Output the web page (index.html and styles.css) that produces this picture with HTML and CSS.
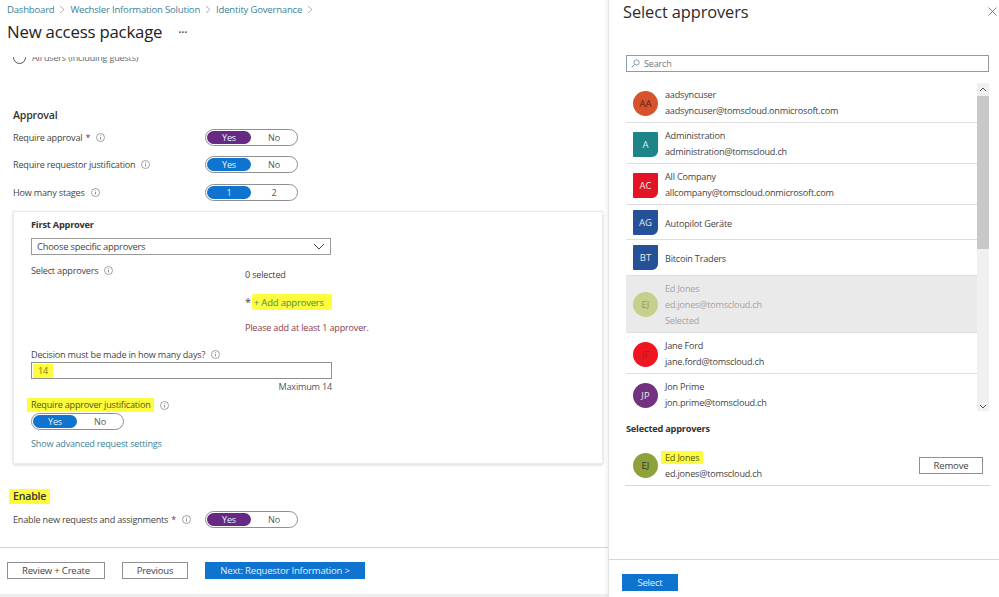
FILE: index.html
```html
<!DOCTYPE html>
<html lang="en">
<head>
<meta charset="utf-8">
<title>New access package</title>
<link rel="stylesheet" href="styles.css">
</head>
<body>
<svg class="defs" aria-hidden="true">
  <symbol id="info" viewBox="0 0 9 9"><circle cx="4.5" cy="4.5" r="4" fill="none" stroke="#8a8a8a" stroke-width=".8"/><path d="M4.5 3.9v2.6M4.5 2.3v.8" stroke="#777" stroke-width=".8" fill="none"/></symbol>
  <symbol id="crumb" viewBox="0 0 6 9"><path d="M1 1l4 3.5L1 8" fill="none" stroke="#a6a6a6" stroke-width=".9"/></symbol>
</svg>
<div class="app">
  <main class="main">
    <nav class="crumbs">
      <a>Dashboard</a><svg class="sep"><use href="#crumb"/></svg>
      <a>Wechsler Information Solution</a><svg class="sep"><use href="#crumb"/></svg>
      <a>Identity Governance</a><svg class="sep"><use href="#crumb"/></svg>
    </nav>
    <header class="title-row">
      <h1>New access package</h1>
      <span class="dots">···</span>
    </header>
    <div class="scroll">
      <div class="radio-row"><span class="radio"></span><span class="radio-text">All users (including guests)</span></div>
      <h2 class="approval-h">Approval</h2>
      <div class="row r1"><div class="label">Require approval <b class="star">*</b><svg class="info"><use href="#info"/></svg></div>
        <div class="toggle"><span class="on purple">Yes</span><span class="off">No</span></div></div>
      <div class="row r2"><div class="label">Require requestor justification<svg class="info"><use href="#info"/></svg></div>
        <div class="toggle"><span class="on">Yes</span><span class="off">No</span></div></div>
      <div class="row r3"><div class="label">How many stages<svg class="info"><use href="#info"/></svg></div>
        <div class="toggle"><span class="on">1</span><span class="off">2</span></div></div>
      <section class="card">
        <h3>First Approver</h3>
        <div class="select"><span>Choose specific approvers</span>
          <svg class="chev" viewBox="0 0 12 7"><path d="M1 1l5 5 5-5" fill="none" stroke="#444" stroke-width="1"/></svg></div>
        <div class="pick">
          <div class="pick-label">Select approvers<svg class="info"><use href="#info"/></svg></div>
          <div class="pick-value">
            <div class="zero">0 selected</div>
            <div class="add"><span class="star-dark">*</span><span class="hl add-link">+ Add approvers</span></div>
            <div class="error">Please add at least 1 approver.</div>
          </div>
        </div>
        <div class="days-label">Decision must be made in how many days?<svg class="info"><use href="#info"/></svg></div>
        <div class="input"><span class="hl days">14</span></div>
        <div class="max">Maximum 14</div>
        <div class="just-label"><span class="hl just">Require approver justification</span><svg class="info"><use href="#info"/></svg></div>
        <div class="toggle narrow"><span class="on">Yes</span><span class="off">No</span></div>
        <a class="advanced">Show advanced request settings</a>
      </section>
      <h2 class="enable-h"><span class="hl enable">Enable</span></h2>
      <div class="row r4"><div class="label">Enable new requests and assignments <b class="star">*</b><svg class="info"><use href="#info"/></svg></div>
        <div class="toggle"><span class="on purple">Yes</span><span class="off">No</span></div></div>
    </div>
    <footer class="foot">
      <button class="btn review">Review + Create</button>
      <button class="btn prev">Previous</button>
      <button class="btn primary next">Next: Requestor Information &gt;</button>
    </footer>
    <div class="strip"></div>
  </main>
  <aside class="panel">
    <header class="panel-head">
      <h2>Select approvers</h2>
      <svg class="close" viewBox="0 0 10 10"><path d="M.5.5l9 9M9.5.5l-9 9" stroke="#555" stroke-width=".8" fill="none"/></svg>
    </header>
    <div class="search">
      <svg class="mag" viewBox="0 0 10 10"><circle cx="6.2" cy="3.8" r="2.9" fill="none" stroke="#5b8a9c" stroke-width=".9"/><path d="M4 6L.8 9.2" stroke="#5b8a9c" stroke-width="1" fill="none"/></svg>
      <span>Search</span>
    </div>
    <div class="list-wrap">
      <ul class="list">
        <li class="item h40"><span class="av round orange">AA</span><div class="who"><div>aadsyncuser</div><div>aadsyncuser@tomscloud.onmicrosoft.com</div></div></li>
        <li class="item h41"><span class="av group teal">A</span><div class="who"><div>Administration</div><div>administration@tomscloud.ch</div></div></li>
        <li class="item h41"><span class="av group red">AC</span><div class="who"><div>All Company</div><div>allcompany@tomscloud.onmicrosoft.com</div></div></li>
        <li class="item h35"><span class="av group navy">AG</span><div class="who"><div>Autopilot Geräte</div></div></li>
        <li class="item h36"><span class="av group navy">BT</span><div class="who"><div>Bitcoin Traders</div></div></li>
        <li class="item h57 chosen"><span class="av round pale">EJ</span><div class="who"><div>Ed Jones</div><div>ed.jones@tomscloud.ch</div><div>Selected</div></div></li>
        <li class="item h41"><span class="av round scarlet">JF</span><div class="who"><div>Jane Ford</div><div>jane.ford@tomscloud.ch</div></div></li>
        <li class="item h40 last"><span class="av round plum">JP</span><div class="who"><div>Jon Prime</div><div>jon.prime@tomscloud.ch</div></div></li>
      </ul>
      <div class="bar">
        <svg class="arrow" viewBox="0 0 8 5"><path d="M1 4l3-3 3 3" fill="none" stroke="#555" stroke-width="1"/></svg>
        <div class="thumb"></div>
        <svg class="arrow down" viewBox="0 0 8 5"><path d="M1 1l3 3 3-3" fill="none" stroke="#555" stroke-width="1"/></svg>
      </div>
    </div>
    <h3 class="sel-h">Selected approvers</h3>
    <div class="sel-row">
      <span class="av round olive">EJ</span>
      <div class="who"><div><span class="hl ed">Ed Jones</span></div><div>ed.jones@tomscloud.ch</div></div>
      <button class="btn remove">Remove</button>
    </div>
    <div class="panel-space"></div>
    <footer class="panel-foot"><button class="btn primary select-btn">Select</button></footer>
  </aside>
</div>
</body>
</html>
```
FILE: styles.css
```css
* { box-sizing: border-box; }
html, body { margin: 0; padding: 0; height: 100%; }
body { font-family: "Open Sans", "Noto Sans", sans-serif; font-size: 9.1px; letter-spacing: -.2px; color: #444; background: #fff; overflow: hidden; }
.defs { position: absolute; width: 0; height: 0; }
h1, h2, h3, ul { margin: 0; padding: 0; }
ul { list-style: none; }
.app { display: flex; width: 999px; height: 597px; }

/* main */
.main { width: 608px; flex: none; display: flex; flex-direction: column; height: 597px; }
.crumbs { height: 18px; padding-left: 7px; display: flex; align-items: center; gap: 5px; color: #3d8296; font-size: 9.55px; white-space: nowrap; }
.sep { width: 6px; height: 9px; }
.title-row { height: 39px; padding: 0 0 13px 7px; display: flex; align-items: center; }
h1 { font-size: 16.8px; letter-spacing: -.2px; font-weight: 500; color: #222; white-space: nowrap; }
.dots { margin-left: 16px; font-size: 11px; color: #555; font-weight: 700; }
.scroll { height: 490px; overflow: hidden; padding-left: 13px; flex: none; }
.radio-row { margin-top: -6px; height: 13px; margin-bottom: 43px; display: flex; align-items: center; gap: 6px; color: #666; }
.radio-text { line-height: 13px; height: 13px; flex: none; }
.radio { width: 13px; height: 13px; border: 1px solid #555; border-radius: 50%; flex: none; }
h2 { font-weight: 600; color: #333; }
.approval-h { font-size: 10.6px; height: 16px; line-height: 16px; margin: 0 0 6px; }
.row { display: flex; align-items: center; height: 17px; }
.label { width: 192px; display: flex; align-items: center; white-space: nowrap; flex: none; }
.star { color: #a4262c; font-weight: 400; margin-left: 3px; }
.info { width: 9px; height: 9px; margin-left: 6px; flex: none; }
.r1 { margin-bottom: 10px; }
.r2 { margin-bottom: 11px; }
.r3 { margin-bottom: 10px; }
.toggle { width: 93px; height: 17px; border: 1px solid #8f8f8f; border-radius: 9px; display: flex; align-items: center; padding: 0 1px; flex: none; }
.toggle span { display: flex; align-items: center; justify-content: center; height: 13px; }
.on { width: 44px; border-radius: 7px; background: #0e74cf; color: #e6f0f8; }
.on.purple { background: #672a84; }
.off { flex: 1; color: #555; padding-left: 1px; }
.card { width: 590px; height: 253px; border: 1px solid #eaeaea; box-shadow: 0 1px 3px rgba(0,0,0,.16); padding: 0 0 0 17px; }
.card h3 { font-size: 9.2px; font-weight: 700; color: #333; height: 13px; line-height: 13px; margin: 6px 0 7px; }
.select { width: 300px; height: 17px; border: 1px solid #9a9a9a; display: flex; align-items: center; justify-content: space-between; padding: 0 5px; font-size: 9.3px; }
.chev { width: 12px; height: 7px; }
.pick { display: flex; margin-top: 9px; }
.pick-label { width: 214px; height: 13px; display: flex; align-items: center; flex: none; }
.zero { height: 13px; line-height: 13px; margin-top: 4px; }
.add { height: 16px; line-height: 16px; margin-top: 13px; display: flex; }
.star-dark { color: #444; margin-right: 1px; font-size: 11px; }
.hl { background: #fdfd3d; }
.add-link { color: #4d8a4a; font-size: 9.5px; padding: 1px 8px 0 2px; border-radius: 2px; }
.error { color: #8c3b4b; height: 13px; line-height: 13px; margin-top: 11px; }
.days-label { margin-top: 14px; height: 13px; display: flex; align-items: center; }
.input { width: 301px; height: 17px; border: 1px solid #909090; margin-top: 1px; display: flex; align-items: center; padding-left: 1px; }
.days { padding: 0 5px; height: 14px; line-height: 14px; color: #7a7a10; }
.max { width: 301px; text-align: right; height: 13px; line-height: 13px; margin-top: 1px; color: #555; }
.just-label { display: flex; align-items: center; margin: 5px 0 1px -4px; height: 14px; }
.just { padding: 0 3px 0 4px; height: 14px; line-height: 14px; color: #55550f; }
.narrow { width: 93px; }
.advanced { display: block; color: #3d8296; margin-top: 7px; height: 13px; line-height: 13px; }
.enable-h { margin: 25px 0 7px -4px; height: 15px; line-height: 15px; font-size: 10.6px; }
.enable { padding: 0 4px; display: inline-block; height: 15px; }
.foot { height: 47px; border-top: 1px solid #d5d5d5; display: flex; align-items: flex-start; padding: 14px 0 0 7px; flex: none; }
.btn { font: inherit; font-size: 9.55px; letter-spacing: inherit; background: #fff; border: 1px solid #8f8f8f; height: 17px; padding: 0; color: #444; }
.primary { background: #0e74cf; border-color: #0e74cf; color: #e2eef8; }
.review { width: 98px; margin-right: 17px; }
.prev { width: 66px; margin-right: 17px; }
.next { width: 160px; }
.strip { height: 3px; background: #eeeeee; flex: none; margin-top: auto; }

/* panel */
.panel { flex: 1; display: flex; flex-direction: column; border-left: 1px solid #e3e3e3; box-shadow: -2px 0 3px rgba(0,0,0,.05); height: 597px; }
.panel-head { height: 25px; padding: 0 1px 2px 14px; display: flex; align-items: center; justify-content: space-between; flex: none; }
.panel-head h2 { font-size: 16.4px; letter-spacing: -.1px; font-weight: 500; color: #2b2b2b; white-space: nowrap; }
.close { width: 9px; height: 9px; margin-right: 1px; }
.search { margin: 30px 10px 0 17px; height: 17px; border: 1px solid #8b9ca5; display: flex; align-items: center; padding-left: 4px; color: #777; flex: none; }
.mag { width: 9px; height: 9px; margin-right: 4px; }
.list-wrap { margin: 11px 10px 0 17px; height: 328px; display: flex; flex: none; overflow: hidden; }
.list { width: 351px; flex: none; height: 328px; overflow: hidden; }
.item { display: flex; align-items: center; border-bottom: 1px solid #dfdfdf; padding: 2px 0 0 7px; overflow: hidden; }
.item .who { margin-bottom: 2px; }
.h40 { height: 40px; } .h41 { height: 41px; } .h35 { height: 35px; } .h36 { height: 36px; } .h57 { height: 57px; }
.h35, .h36, .h57 { padding-top: 0; }
.item.h35 .who, .item.h36 .who { margin: 2px 0 0; }
.item.h57 .who { margin: 0; }
.last { border-bottom: 0; }
.av { width: 25px; height: 25px; flex: none; display: flex; align-items: center; justify-content: center; color: #e8e8e8; font-size: 9.5px; letter-spacing: 0; margin-right: 7px; }
.round { border-radius: 50%; }
.group { border-radius: 1px 1px 6px 1px; }
.orange { background: #d7532c; color: #5a2412; }
.teal { background: #1d8588; }
.red { background: #e51424; }
.navy { background: #255199; }
.pale { background: #c6cf8b; color: #8f9a5d; }
.scarlet { background: #ee1620; color: #a81f28; }
.plum { background: #723280; }
.olive { background: #8da33a; color: #333; }
.who { display: flex; flex-direction: column; gap: 3px; line-height: 13px; color: #444; white-space: nowrap; }
.chosen { background: #eaeaea; }
.chosen .who { color: #a3a3a3; }
.bar { width: 12px; flex: none; background: #f0f0f0; display: flex; flex-direction: column; align-items: center; }
.arrow { width: 8px; height: 5px; margin: 4px 0; flex: none; }
.thumb { width: 12px; height: 153px; background: #c8c8c8; flex: none; }
.arrow.down { margin-top: auto; margin-bottom: 2px; }
.sel-h { font-size: 9.2px; font-weight: 700; color: #333; height: 13px; line-height: 13px; margin: 11px 0 0 17px; flex: none; }
.sel-row { height: 50px; margin: 1px 9px 0 16px; display: flex; align-items: center; padding: 10px 7px 0 8px; border-bottom: 1px solid #d8d8d8; flex: none; }
.sel-row .who { flex: 1; }
.ed { padding: 0 4px; margin-left: -4px; color: #56561a; }
.remove { width: 64px; flex: none; }
.panel-space { flex: 1; }
.panel-foot { height: 38px; border-top: 1px solid #d5d5d5; padding: 14px 0 0 13px; flex: none; }
.select-btn { width: 56px; }
```
